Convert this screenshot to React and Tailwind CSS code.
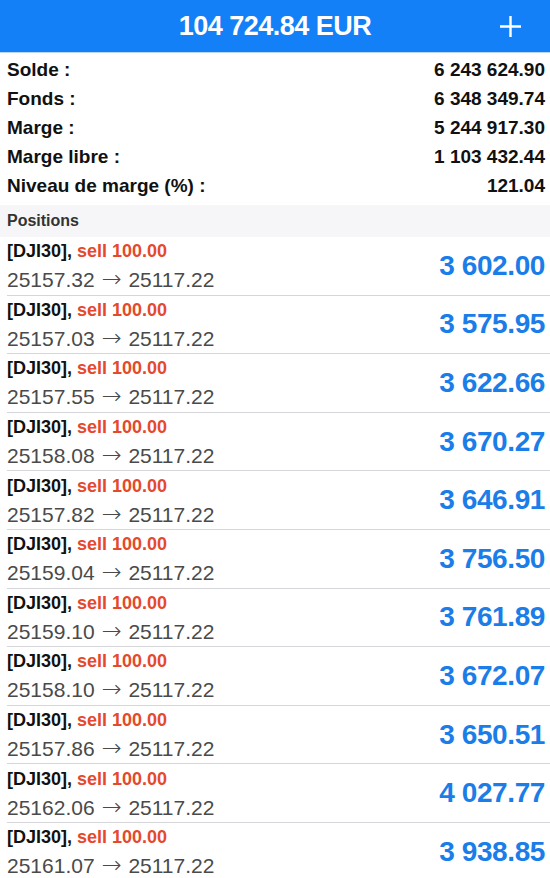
import React from 'react';

const summary = [
  { label: 'Solde :', value: '6 243 624.90' },
  { label: 'Fonds :', value: '6 348 349.74' },
  { label: 'Marge :', value: '5 244 917.30' },
  { label: 'Marge libre :', value: '1 103 432.44' },
  { label: 'Niveau de marge (%) :', value: '121.04' },
];

const positions = [
  { open: '25157.32', profit: '3 602.00' },
  { open: '25157.03', profit: '3 575.95' },
  { open: '25157.55', profit: '3 622.66' },
  { open: '25158.08', profit: '3 670.27' },
  { open: '25157.82', profit: '3 646.91' },
  { open: '25159.04', profit: '3 756.50' },
  { open: '25159.10', profit: '3 761.89' },
  { open: '25158.10', profit: '3 672.07' },
  { open: '25157.86', profit: '3 650.51' },
  { open: '25162.06', profit: '4 027.77' },
  { open: '25161.07', profit: '3 938.85' },
];

const PositionRow = ({ p }) => (
  <div className="ml-[7px] h-[58.6px] shrink-0 border-b border-[#d6d6da] flex items-center justify-between pr-[5px]">
    <div className="flex flex-col pt-[1px]">
      <div className="text-[18px] leading-[22px] font-bold text-[#111]">
        [DJI30], <span className="text-[#e5492d]">sell 100.00</span>
      </div>
      <div className="mt-[5px] text-[21px] leading-[24px] text-[#4a4a4a] whitespace-nowrap">
        {p.open}{' '}
        <span className="font-['DejaVu_Sans'] font-light text-[24px] leading-none mx-[1px]">→</span>{' '}
        25117.22
      </div>
    </div>
    <div className="text-[28px] leading-none font-bold text-[#1a7de8] tracking-[-0.4px]">
      {p.profit}
    </div>
  </div>
);

export default function App() {
  return (
    <div
      className="w-full h-[878px] overflow-hidden bg-white flex flex-col"
      style={{ fontFamily: '"Liberation Sans", Arial, sans-serif' }}
    >
      <div className="h-[53px] shrink-0 bg-[#1480f8] border-b border-[#b9d7f7] grid grid-cols-[1fr_auto_1fr] items-center">
        <div />
        <div className="text-white font-bold text-[27px] tracking-[-0.5px] leading-none">
          104 724.84 EUR
        </div>
        <div className="flex justify-end pr-[28px]">
          <svg width="23" height="23" viewBox="0 0 23 23" fill="none">
            <path d="M11.5 1v21M1 11.5h21" stroke="white" strokeWidth="2.4" />
          </svg>
        </div>
      </div>

      <div className="pt-[3px] pb-[4px] pl-[7px] pr-[5px] shrink-0">
        {summary.map((s) => (
          <div key={s.label} className="h-[29px] flex items-center justify-between font-bold text-[19px] text-[#111]">
            <span>{s.label}</span>
            <span>{s.value}</span>
          </div>
        ))}
      </div>

      <div className="h-[32px] shrink-0 bg-[#f6f6f8] flex items-center px-[7px] text-[16px] font-bold text-[#333]">
        Positions
      </div>

      <div className="flex flex-col">
        {positions.map((p, i) => (
          <PositionRow key={i} p={p} />
        ))}
      </div>
    </div>
  );
}
